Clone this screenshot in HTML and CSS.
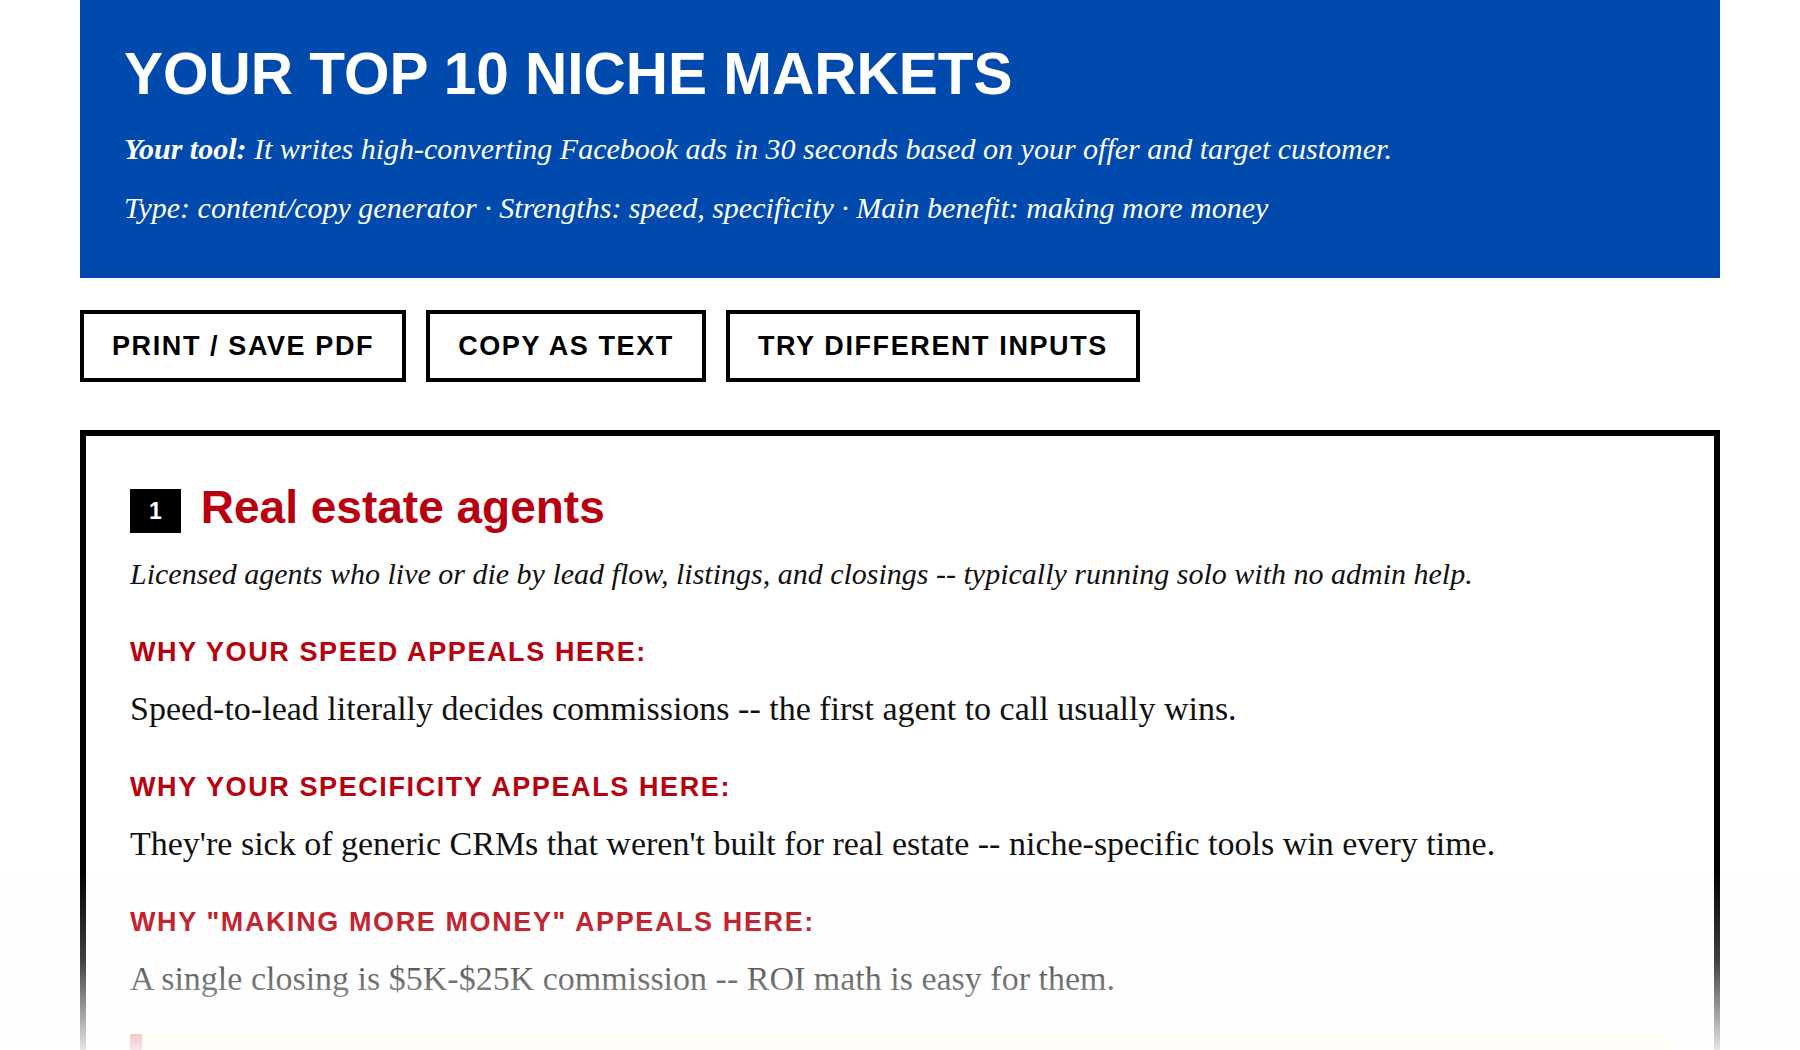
FILE: index.html
```html
<!DOCTYPE html>
<html lang="en">
<head>
<meta charset="utf-8">
<title>Your Top 10 Niche Markets</title>
<link rel="stylesheet" href="styles.css">
</head>
<body>
<div class="page">
  <header class="hero">
    <h1 class="hero-title">YOUR TOP 10 NICHE MARKETS</h1>
    <p class="hero-line"><strong>Your tool:</strong> It writes high-converting Facebook ads in 30 seconds based on your offer and target customer.</p>
    <p class="hero-line">Type: content/copy generator · Strengths: speed, specificity · Main benefit: making more money</p>
  </header>

  <div class="actions">
    <button class="btn" type="button">PRINT / SAVE PDF</button>
    <button class="btn" type="button">COPY AS TEXT</button>
    <button class="btn" type="button">TRY DIFFERENT INPUTS</button>
  </div>

  <article class="niche">
    <div class="niche-head">
      <span class="rank">1</span>
      <h2 class="niche-title">Real estate agents</h2>
    </div>
    <p class="niche-desc">Licensed agents who live or die by lead flow, listings, and closings -- typically running solo with no admin help.</p>

    <section class="reason">
      <h3 class="reason-label">WHY YOUR SPEED APPEALS HERE:</h3>
      <p class="reason-text">Speed-to-lead literally decides commissions -- the first agent to call usually wins.</p>
    </section>
    <section class="reason">
      <h3 class="reason-label">WHY YOUR SPECIFICITY APPEALS HERE:</h3>
      <p class="reason-text">They're sick of generic CRMs that weren't built for real estate -- niche-specific tools win every time.</p>
    </section>
    <section class="reason">
      <h3 class="reason-label">WHY "MAKING MORE MONEY" APPEALS HERE:</h3>
      <p class="reason-text">A single closing is $5K-$25K commission -- ROI math is easy for them.</p>
    </section>

    <div class="callout">
      <h4 class="callout-label">SAMPLE AD ANGLE:</h4>
      <p class="callout-text">"The agent who calls first gets the listing. Here's how to be first every time."</p>
    </div>
  </article>
</div>
<div class="fade"></div>
</body>
</html>
```

FILE: styles.css
```css
* {
  box-sizing: border-box;
}

html,
body {
  margin: 0;
  padding: 0;
  background: #ffffff;
}

body {
  font-family: "Liberation Serif", "Times New Roman", serif;
  color: #111111;
}

.page {
  max-width: 1640px;
  margin: 0 auto;
  padding-bottom: 80px;
}

/* ---------- header ---------- */
.hero {
  background: #004aad;
  color: #ffffff;
  padding: 42px 44px 48px;
}

.hero-title {
  margin: 0 0 20px;
  font-family: "Liberation Sans", Arial, sans-serif;
  font-weight: 700;
  font-size: 58.5px;
  line-height: 1.1;
  letter-spacing: 0;
}

.hero-line {
  margin: 0 0 14px;
  font-family: "Liberation Serif", "Times New Roman", serif;
  font-style: italic;
  font-size: 30px;
  line-height: 1.5;
}

.hero-line:last-child {
  margin-bottom: 0;
}

.hero-line strong {
  font-weight: 700;
}

/* ---------- buttons ---------- */
.actions {
  display: flex;
  gap: 20px;
  margin: 32px 0 48px;
}

.btn {
  margin: 0;
  background: #ffffff;
  color: #000000;
  border: 4px solid #000000;
  border-radius: 0;
  padding: 18px 28px;
  font-family: "Liberation Sans", Arial, sans-serif;
  font-weight: 700;
  font-size: 27px;
  line-height: 28px;
  letter-spacing: 1.6px;
  cursor: pointer;
}

/* ---------- niche card ---------- */
.niche {
  border: 6px solid #000000;
  background: #ffffff;
  padding: 44px;
}

.niche-head {
  display: flex;
  align-items: flex-end;
  gap: 20px;
}

.rank {
  display: inline-block;
  margin-bottom: 3px;
  background: #000000;
  color: #ffffff;
  font-family: "Liberation Sans", Arial, sans-serif;
  font-weight: 700;
  font-size: 23px;
  line-height: 26px;
  padding: 9px 19px;
}

.niche-title {
  margin: 0;
  font-family: "Liberation Sans", Arial, sans-serif;
  font-weight: 700;
  font-size: 46px;
  line-height: 1.2;
  color: #b8000e;
}

.niche-desc {
  margin: 15px 0 41px;
  font-style: italic;
  font-size: 30px;
  line-height: 1.5;
}

.reason {
  margin-bottom: 38px;
}

.reason:last-of-type {
  margin-bottom: 30px;
}

.reason-label {
  margin: 0 0 15px;
  font-family: "Liberation Sans", Arial, sans-serif;
  font-weight: 700;
  font-size: 27px;
  line-height: 1.15;
  letter-spacing: 1.6px;
  color: #b8000e;
}

.reason-text {
  margin: 0;
  font-size: 34px;
  line-height: 1.5;
  color: #111111;
}

.callout {
  background: #fff3c8;
  border-left: 12px solid #b8000e;
  padding: 28px 32px;
}

.callout-label {
  margin: 0 0 12px;
  font-family: "Liberation Sans", Arial, sans-serif;
  font-weight: 700;
  font-size: 22px;
  letter-spacing: 2px;
  color: #b8000e;
}

.callout-text {
  margin: 0;
  font-size: 30px;
  line-height: 1.5;
}

/* ---------- bottom fade overlay ---------- */
.fade {
  position: fixed;
  left: 0;
  right: 0;
  bottom: 0;
  height: 180px;
  pointer-events: none;
  background: linear-gradient(
    to bottom,
    rgba(255, 255, 255, 0) 0%,
    rgba(255, 255, 255, 0.25) 50%,
    rgba(255, 255, 255, 0.9) 100%
  );
}
```
